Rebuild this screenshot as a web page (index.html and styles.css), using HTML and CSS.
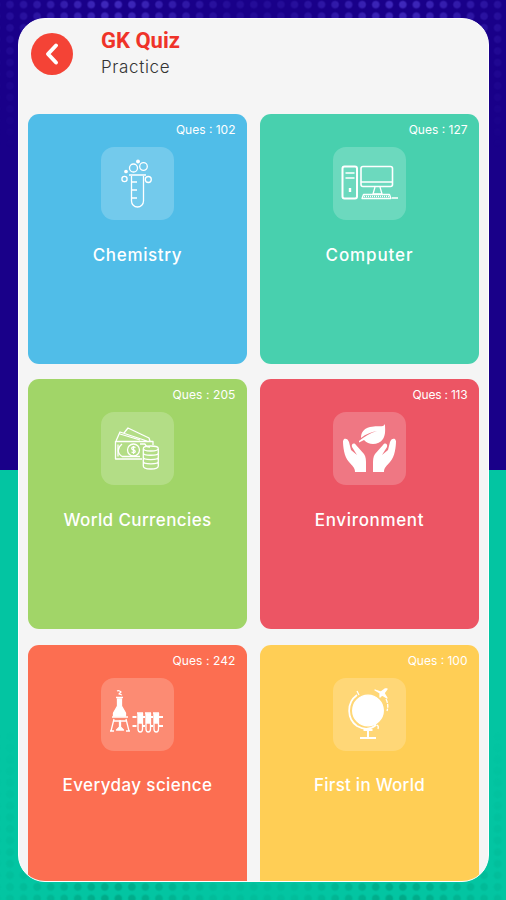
FILE: index.html
```html
<!DOCTYPE html>
<html lang="en">
<head>
<meta charset="utf-8">
<title>GK Quiz</title>
<link rel="stylesheet" href="styles.css">
</head>
<body>
<div class="backdrop"><div class="dots dots-top"></div><div class="dots dots-bottom"></div></div>
<main class="screen">
  <header class="header">
    <button class="back" aria-label="Back"><svg viewBox="0 0 42 42"><path d="M25 12.500 17 21l8 8.500"/></svg></button>
    <div class="heading"><h1>GK Quiz</h1><p>Practice</p></div>
  </header>
  <section class="grid">
    <article class="tile chemistry">
      <span class="count">Ques : 102</span>
      <svg class="icon" viewBox="0 0 73 73"><path d="M28 28h17M30.500 29v25a6 6 0 0 0 12 0V29M31 35h5M31 43h5M31 51h5"/><circle cx="32.500" cy="21" r="4"/><circle cx="42.500" cy="19.500" r="3.800"/><circle cx="23.500" cy="32" r="2.600"/><circle cx="47.300" cy="32.500" r="3"/><circle class="solid" cx="37" cy="14.500" r="1.300"/><circle class="solid" cx="25" cy="24.500" r="1.200"/></svg>
      <h2>Chemistry</h2>
    </article>
    <article class="tile computer">
      <span class="count">Ques : 127</span>
      <svg class="icon" viewBox="0 0 73 73"><rect x="9.500" y="19.500" width="14.500" height="32" rx="2" stroke-width="2"/><path d="M12.500 26h9M12.500 31h9" stroke-width="1.600"/><path d="M17 41v4" stroke-width="2.400"/><rect x="28" y="19.500" width="31.500" height="20" rx="2" stroke-width="1.600"/><path d="M28 35h31.500M42 40l-2 7h9l-2-7M59 51h6"/><path d="M29 51.500l1.500-4h26l1.500 4z"/><path d="M31 49.500h26" stroke-dasharray="1 1"/></svg>
      <h2>Computer</h2>
    </article>
    <article class="tile currency">
      <span class="count">Ques : 205</span>
      <svg class="icon" viewBox="0 0 73 73"><path d="M41 47H14.500V29.500H52V33M17 32.500v12M15 29l4-9 27 9M23 21l4-5 21 10 1 3M19 22l20 6"/><path d="M21 32c-5 4-5 9 0 12.500M39 32h5c1 3 3 3 5 3M21 44.500h18"/><circle cx="32.500" cy="38" r="6"/><path d="M34.500 35.500c-4-2-5 2-2 2.500s2 4-2 2M32.500 34v8"/><ellipse cx="49.800" cy="36.500" rx="7.500" ry="2.500"/><path d="M42.300 37v17c0 4 15 4 15 0V37M42.300 41c0 3 15 3 15 0M42.300 45.300c0 3 15 3 15 0M42.300 49.600c0 3 15 3 15 0"/></svg>
      <h2>World Currencies</h2>
    </article>
    <article class="tile environment">
      <span class="count">Ques : 113</span>
      <svg class="icon filled" viewBox="0 0 73 73"><path d="M52 12C50 16 45 13 37 15c-7 2-9 6-9 11 5-4 10-6 16-7-7 2-13 6-18 10v1.500l5-2.500c5 6 15 5 19-1 3-5 2-10 2-15z"/><path id="hand" d="M11 27c2-1 4 0 5 3l2 8 6 5-5-8c-1-3 2-5 4-2l8 9c2 3 2 6 2 10v8H22c0-5-3-6-6-10-5-5-6-16-6-21z"/><use href="#hand" transform="matrix(-1 0 0 1 73 0)"/></svg>
      <h2>Environment</h2>
    </article>
    <article class="tile science">
      <span class="count">Ques : 242</span>
      <svg class="icon" viewBox="0 0 73 73"><path class="solid" d="M16.500 21h4v7l4 7v3H12.500v-3l4-7z"/><path d="M16 13q2-1 4 1l-2 2 3 1M15 19.500h7M11 39h16M12 43h14M13 41l-3 12M25 41l3 12M9 53h4M25 53h4"/><path class="solid" d="M18.500 43h1v6l3 3h-7l3-3z"/><path d="M31.500 39h4M31.500 48h4M41 39h3M41 48h3M49 39h3M49 48h3M58 39h4M58 48h4" stroke-width="1.800"/><g id="tube"><path d="M36 35h6M37 35v16c0 4 4.500 4 4.500 0V35"/><path class="solid" d="M37.500 36h3.500v9h-3.500z"/></g><use href="#tube" x="8"/><use href="#tube" x="16"/></svg>
      <h2>Everyday science</h2>
    </article>
    <article class="tile world">
      <span class="count">Ques : 100</span>
      <svg class="icon" viewBox="0 0 73 73"><circle class="solid" cx="35" cy="32.500" r="15.300"/><path d="M24 17c-11 8-10 24 0 31 7 4 13 4 19-1" stroke-width="1.700"/><path d="M26 17l-2-4M43 48l-1-3M44 47q2 1 1 4"/><path d="M35 50v9M30.500 52h9M27 60h16" stroke-width="2"/><path class="solid" d="M42 12l6 2 4-3h2l-3 4 3 5-5-3-2 2v-4z"/><path d="M53 21q3 6 1 12" stroke-dasharray="4 1"/></svg>
      <h2>First in World</h2>
    </article>
  </section>
</main>
</body>
</html>
```
FILE: styles.css
```css
* { box-sizing: border-box; }
body { margin: 0; height: 900px; overflow: hidden; font-family: Inter, "Open Sans", sans-serif; background: linear-gradient(#190089 470px, #03c5a2 470px); padding: 18px 17px 18px 18px; }
.backdrop { position: absolute; inset: 0; }
.dots { position: absolute; left: 0; right: 0; height: 220px; background-size: 13.55px 11.6px; }
.dots-top { top: 0; background-image: radial-gradient(circle, #4029bd 3px, transparent 4.6px); background-position: 3.2px -1.2px; mask-image: radial-gradient(ellipse 115px 100px at 115px 0, #000, transparent), radial-gradient(ellipse 115px 100px at 398px 0, #000, transparent), linear-gradient(rgba(0,0,0,.3), transparent 150px); }
.dots-bottom { bottom: 0; background-image: radial-gradient(circle, #00a987 3px, transparent 4.6px); background-position: 3.2px 4px; mask-image: radial-gradient(ellipse 105px 100px at 115px 100%, #000, transparent), radial-gradient(ellipse 105px 100px at 400px 100%, #000, transparent), linear-gradient(transparent 50px, rgba(0,0,0,.25)); }
.screen { position: relative; height: 864px; overflow: hidden; border-radius: 27px; border: 1px solid #fff; background: #f5f5f5; }
.header { display: flex; height: 95px; padding: 14px 12px 0; }
.back { width: 42px; height: 42px; border: 0; padding: 0; border-radius: 50%; background: #f44336; }
.back svg { display: block; width: 42px; height: 42px; fill: none; stroke: #fff; stroke-width: 4; stroke-linecap: round; stroke-linejoin: round; }
.heading { margin: -7px 0 0 28px; }
h1 { margin: 0; font: 700 22px/29px Roboto, sans-serif; letter-spacing: 0; color: #ef3329; }
.heading p { margin: 0; font-size: 17px; font-weight: 300; line-height: 24px; color: #333; letter-spacing: .65px; }
.grid { display: grid; grid-template-columns: 219px 219px; gap: 15.3px 13px; grid-auto-rows: 250px; padding-left: 9px; }
.tile { display: flex; flex-direction: column; align-items: center; border-radius: 11px; color: #fff; }
.chemistry { background: #50bde8; }
.computer { background: #48d0ae; }
.currency { background: #a1d568; }
.environment { background: #ec5564; }
.science { background: #fc6e51; }
.world { background: #ffce55; }
.count { align-self: flex-end; margin: 7px 11.500px 0 0; height: 26px; font-size: 12px; line-height: 17px; white-space: nowrap; }
.currency .count, .science .count { letter-spacing: .1px; }
.environment .count { letter-spacing: -.2px; }
.icon { width: 73px; height: 73px; border-radius: 13px; background: rgba(255,255,255,.2); fill: none; stroke: #fff; stroke-width: 1.300; stroke-linejoin: round; flex: none; }
.icon .solid, .filled { fill: #fff; }
.filled { stroke: none; }
h2 { margin: 22.500px 0 0; font-size: 17px; line-height: 25px; font-weight: 500; letter-spacing: .65px; white-space: nowrap; }
.computer h2 { letter-spacing: .9px; }
.currency h2, .science h2 { letter-spacing: .4px; }
.world h2 { letter-spacing: .25px; }
```
